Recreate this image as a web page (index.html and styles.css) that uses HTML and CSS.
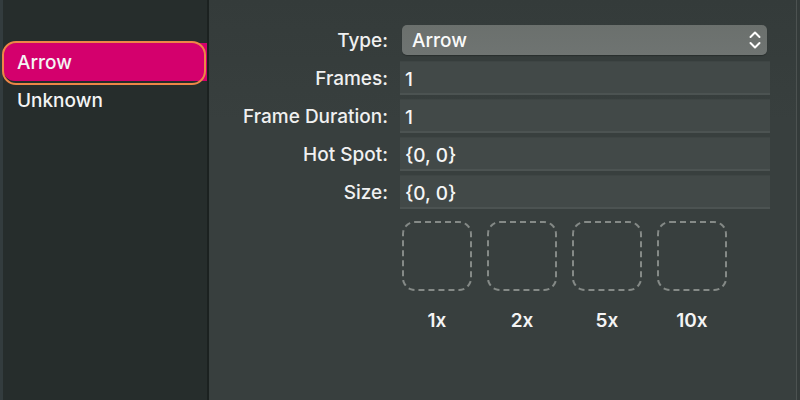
FILE: index.html
```html
<!DOCTYPE html>
<html>
<head>
<meta charset="utf-8">
<link rel="stylesheet" href="styles.css">
</head>
<body>
<div class="app">
  <aside class="sidebar">
    <div class="item selected">
      <span>Arrow</span>
      <div class="ring"></div>
    </div>
    <div class="item">Unknown</div>
  </aside>
  <main class="panel">
    <div class="form">
      <div class="label type-label">Type:</div>
      <div class="popup">
        <span>Arrow</span>
        <svg class="chev" width="12" height="20" viewBox="0 0 12 20">
          <path d="M1.5 7 L6 2.5 L10.5 7" fill="none" stroke="#fff" stroke-width="2" stroke-linecap="round" stroke-linejoin="round"/>
          <path d="M1.5 13 L6 17.5 L10.5 13" fill="none" stroke="#fff" stroke-width="2" stroke-linecap="round" stroke-linejoin="round"/>
        </svg>
      </div>
      <div class="label">Frames:</div>
      <div class="field">1</div>
      <div class="label">Frame Duration:</div>
      <div class="field">1</div>
      <div class="label">Hot Spot:</div>
      <div class="field">{0, 0}</div>
      <div class="label">Size:</div>
      <div class="field">{0, 0}</div>
    </div>
    <div class="previews">
      <div class="preview"><div class="well"></div><div class="scale">1x</div></div>
      <div class="preview"><div class="well"></div><div class="scale">2x</div></div>
      <div class="preview"><div class="well"></div><div class="scale">5x</div></div>
      <div class="preview"><div class="well"></div><div class="scale">10x</div></div>
    </div>
  </main>
</div>
</body>
</html>
```

FILE: styles.css
```css
* { box-sizing: border-box; }
html, body {
  margin: 0;
  padding: 0;
  width: 800px;
  height: 400px;
  overflow: hidden;
  background: #383f3e;
  font-family: Inter, "Liberation Sans", sans-serif;
  color: #f2f2f2;
}
.app {
  display: flex;
  width: 800px;
  height: 400px;
}
.sidebar {
  width: 209px;
  flex: none;
  background: #262d2c;
  border-left: 3px solid #333c3e;
  border-right: 2px solid #1b2120;
  padding-top: 43px;
}
.item {
  position: relative;
  height: 38px;
  padding-left: 14px;
  display: flex;
  align-items: center;
  font-size: 19px;
  font-weight: 500;
  color: #f4f4f4;
}
.item.selected {
  background: #d4006d;
  border-radius: 12px 0 0 12px;
}
.ring {
  position: absolute;
  top: -2px;
  left: -1px;
  right: 1px;
  bottom: -4px;
  border: 2px solid #ee8646;
  border-radius: 14px;
}
.panel {
  flex: 1;
  background: linear-gradient(#343b3a, #383f3e 120px);
  padding: 25px 0 0 20px;
  box-shadow: inset -3px 0 0 #343b3a, inset -4px 0 0 #4c5251;
  position: relative;
}
.form {
  display: grid;
  grid-template-columns: 159px 370px;
  column-gap: 12px;
  row-gap: 4px;
  align-items: center;
}
.label {
  text-align: right;
  font-size: 19px;
  font-weight: 500;
  color: #f0f0f0;
  white-space: nowrap;
}
.type-label { margin-top: -2px; }
.popup {
  margin-left: 2px;
  width: 365px;
  height: 30px;
  margin-bottom: 2px;
  border-radius: 5px;
  background: linear-gradient(#6b706d, #6f7472);
  box-shadow: 0 1px 1px rgba(0,0,0,0.25);
  display: flex;
  align-items: center;
  justify-content: space-between;
  padding: 0 6px 0 10px;
  font-size: 19px;
  font-weight: 500;
  color: #fafafa;
}
.chev { display: block; }
.field {
  height: 34px;
  background: #424948;
  border-top: 1px solid #3e4544;
  border-bottom: 2px solid #4c5352;
  display: flex;
  align-items: center;
  padding: 4px 0 0 5px;
  font-size: 19px;
  font-weight: 500;
  color: #f6f6f6;
}
.previews {
  display: flex;
  gap: 15px;
  margin-top: 12px;
  margin-left: 173px;
}
.preview {
  width: 70px;
  display: flex;
  flex-direction: column;
  align-items: center;
}
.well {
  width: 70px;
  height: 70px;
  border: 2px dashed #858a87;
  border-radius: 13px;
}
.scale {
  margin-top: 18px;
  font-size: 19px;
  font-weight: 600;
  color: #f4f4f4;
}
```
